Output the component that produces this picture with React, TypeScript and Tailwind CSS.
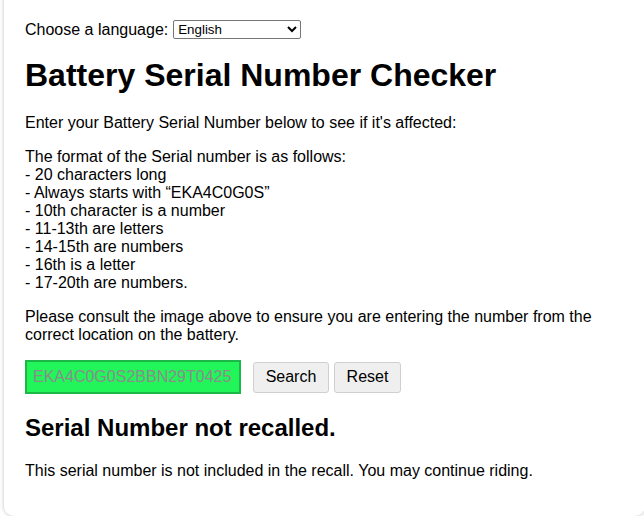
import React from "react";

function App() {
  return (
    <div className="min-h-screen bg-white" style={{ fontFamily: '"Liberation Sans", Arial, sans-serif' }}>
      <div className="ml-[4px] -mr-[1px] -mt-[10px] rounded-[10px] bg-white shadow-[0_0_4px_rgba(0,0,0,0.25)] pl-[21px] pr-[20px] pt-[30px] pb-[20px] text-black">
        <div className="flex items-center h-[19px] text-[16px] leading-[18px]">
          <span>Choose a language:</span>
          <select
            className="ml-[5px] w-[128px] h-[19px] border border-[#767676] rounded-[2px] text-[13.33px] bg-white text-black"
            defaultValue="en"
            style={{ fontFamily: '"Liberation Sans", Arial, sans-serif' }}
          >
            <option value="en">English</option>
            <option value="fr">Français</option>
            <option value="es">Español</option>
          </select>
        </div>

        <h1 className="mt-[18px] mb-[20px] text-[32px] leading-[37px] font-bold">Battery Serial Number Checker</h1>

        <p className="text-[16px] leading-[18px] mb-[16px]">
          Enter your Battery Serial Number below to see if it's affected:
        </p>

        <p className="text-[16px] leading-[18px] mb-[16px]">
          The format of the Serial number is as follows:
          <br />- 20 characters long
          <br />- Always starts with “EKA4C0G0S”
          <br />- 10th character is a number
          <br />- 11-13th are letters
          <br />- 14-15th are numbers
          <br />- 16th is a letter
          <br />- 17-20th are numbers.
        </p>

        <p className="text-[16px] leading-[18px] mb-[16px]">
          Please consult the image above to ensure you are entering the number from the correct location on the battery.
        </p>

        <div className="flex items-center">
          <input
            type="text"
            placeholder="EKA4C0G0S2BBN29T0425"
            className="w-[216px] h-[34px] border-2 border-[#1cb746] bg-[#22f55a] pl-[6px] text-[16px] placeholder:text-[#8c8c8c] outline-none"
            style={{ fontFamily: '"Liberation Sans", Arial, sans-serif' }}
          />
          <button className="ml-[12px] w-[76px] h-[31px] border border-[#cfcfcf] bg-[#efefef] rounded-[3px] text-[16px]">
            Search
          </button>
          <button className="ml-[5px] w-[67px] h-[31px] border border-[#cfcfcf] bg-[#efefef] rounded-[3px] text-[16px]">
            Reset
          </button>
        </div>

        <h2 className="mt-[20px] mb-[20px] text-[24px] leading-[28px] font-bold">Serial Number not recalled.</h2>

        <p className="text-[16px] leading-[18px] mb-[16px]">
          This serial number is not included in the recall. You may continue riding.
        </p>
      </div>
    </div>
  );
}

export default App;
